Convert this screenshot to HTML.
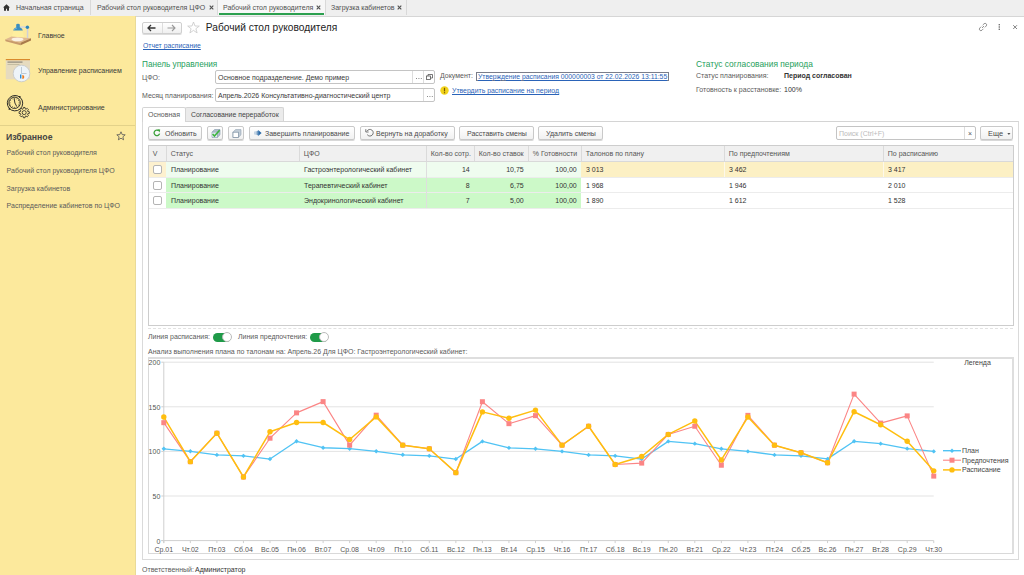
<!DOCTYPE html>
<html><head><meta charset="utf-8">
<style>
*{box-sizing:border-box;margin:0;padding:0}
html,body{width:1024px;height:575px;overflow:hidden;background:#fff;font-family:"Liberation Sans",sans-serif;font-size:7px;color:#5a5a5a}
.a{position:absolute;white-space:nowrap}
#tabs{position:absolute;left:0;top:0;width:1024px;height:16.5px;background:#efefef;border-bottom:1px solid #d6d6d6}
.tab{position:absolute;top:0;height:15px;border-right:1px solid #d9d9d9;line-height:15px;color:#505050}
.x{position:absolute;top:0;font-size:8px;color:#555}
#side{position:absolute;left:0;top:16px;width:136px;height:559px;background:#fce99c;border-right:1px solid #e9da98}
.btn{position:absolute;height:13.5px;border:1px solid #c9c9c9;border-radius:2px;background:linear-gradient(#fff,#f1f1f1);box-shadow:0 1px 0 #d8d8d8;line-height:12.5px;color:#4a4a4a;text-align:center}
.inp{position:absolute;height:14px;border:1px solid #c4c4c4;border-radius:2px;background:#fff;line-height:13.3px;color:#3a3a3a;padding-left:2px}
.sep{position:absolute;top:0;width:1px;height:100%;background:#ddd}
table{border-collapse:collapse}
</style></head><body>
<div id="tabs">
  <div class="tab" style="left:0;width:91px">
    <svg class="a" style="left:3px;top:4px" width="7" height="7" viewBox="0 0 7 7"><path d="M3.5 0.3L0 3.6h1v3.1h2V4.7h1v2h2V3.6h1z" fill="#333"/></svg>
    <span class="a" style="left:16px">Начальная страница</span>
  </div>
  <div class="tab" style="left:91px;width:127px">
    <span class="a" style="left:6px">Рабочий стол руководителя ЦФО</span><svg class="a" style="left:117.5px;top:4.9px" width="5" height="5" viewBox="0 0 5 5"><path d="M0.7 0.7l3.6 3.6M4.3 0.7l-3.6 3.6" stroke="#505050" stroke-width="1.1"/></svg>
  </div>
  <div class="tab" style="left:218px;width:108px;background:#f7f7f7">
    <span class="a" style="left:5px">Рабочий стол руководителя</span><svg class="a" style="left:98.3px;top:4.9px" width="5" height="5" viewBox="0 0 5 5"><path d="M0.7 0.7l3.6 3.6M4.3 0.7l-3.6 3.6" stroke="#505050" stroke-width="1.1"/></svg>
    <div class="a" style="left:1px;top:13px;width:105px;height:2px;background:#2ca04f"></div>
  </div>
  <div class="tab" style="left:326px;width:81px">
    <span class="a" style="left:5px">Загрузка кабинетов</span><svg class="a" style="left:71.3px;top:4.9px" width="5" height="5" viewBox="0 0 5 5"><path d="M0.7 0.7l3.6 3.6M4.3 0.7l-3.6 3.6" stroke="#505050" stroke-width="1.1"/></svg>
  </div>
</div>

<div id="side">
  <svg class="a" style="left:0;top:0" width="136" height="110" viewBox="0 16 136 110">
    <!-- lamp icon -->
    <polygon points="13.8,30.5 22.2,30.5 24.5,38 11,38" fill="#fff4a0" opacity="0.55"/>
    <path d="M5 39.4 L11.5 36.4 L31 38.2 L20.5 42.8 Z" fill="#dfb890"/>
    <path d="M5 39.4 L20.5 42.8 L20.5 45.3 L5.6 41.3 Z" fill="#c89a6c"/>
    <path d="M20.5 42.8 L31 38.2 L31 40.4 L20.5 45.3 Z" fill="#a97a4c"/>
    <ellipse cx="17.5" cy="39.3" rx="6" ry="1.9" fill="#fffaf2" opacity="0.85"/>
    <rect x="26.8" y="27.5" width="1.5" height="10.5" fill="#cfd0d8"/>
    <rect x="20" y="26.3" width="7" height="1.5" fill="#d5d6dc"/>
    <circle cx="27.4" cy="27.2" r="1.7" fill="#2c84ba"/>
    <path d="M16.2 24.8 Q16.2 23.8 18 23.8 Q19.8 23.8 19.8 24.8 V27.3 Q22.8 28.5 22.8 30.5 L13.2 30.5 Q13.2 28.5 16.2 27.3Z" fill="#3b8ec0"/>
    <path d="M14.3 29.8 Q15 28.5 17 28" stroke="#8cc8e8" stroke-width="0.7" fill="none"/>
    <!-- schedule icon -->
    <rect x="5.8" y="59.3" width="24.2" height="20" fill="#e6dbbf"/>
    <rect x="5.8" y="59" width="24.2" height="1.2" fill="#d98a2c"/>
    <rect x="7.5" y="61.5" width="15" height="1.2" fill="#8f8a7c"/>
    <rect x="7.5" y="64" width="12" height="0.6" fill="#b0a890"/>
    <circle cx="21.5" cy="73.5" r="8.3" fill="#eef4f8" stroke="#c4c8cc" stroke-width="0.8"/>
    <path d="M21.5 67 v6.5 h5" stroke="#8aa0b5" stroke-width="0.5" fill="none"/>
    <rect x="20" y="74.5" width="1.4" height="4" fill="#2d8fd8"/>
    <path d="M22.3 75 a2 2 0 0 1 0 4z" fill="#ef7b1a"/>
    <!-- admin icon -->
    <path d="M20.2 97.5 A7.7 7.7 0 1 1 9 108" fill="none" stroke="#222" stroke-width="0.95"/>
    <path d="M9 108 A7.7 7.7 0 0 1 20.2 97.5" fill="none" stroke="#222" stroke-width="0.95" stroke-dasharray="0"/>
    <circle cx="14.6" cy="102.8" r="5.7" fill="none" stroke="#222" stroke-width="0.9"/>
    <path d="M14.60 98.70L14.60 97.70M16.65 99.25L17.15 98.38M18.15 100.75L19.02 100.25M18.70 102.80L19.70 102.80M18.15 104.85L19.02 105.35M16.65 106.35L17.15 107.22M14.60 106.90L14.60 107.90M12.55 106.35L12.05 107.22M11.05 104.85L10.18 105.35M10.50 102.80L9.50 102.80M11.05 100.75L10.18 100.25M12.55 99.25L12.05 98.38" stroke="#222" stroke-width="0.7"/>
    <path d="M14.1 98.4 L14.9 103 L16.6 106.2" stroke="#222" stroke-width="0.9" fill="none"/>
    <circle cx="19.8" cy="96.8" r="0.9" fill="#222"/><circle cx="9.4" cy="108.9" r="0.9" fill="#222"/>
    <path d="M23.03 109.09L23.39 107.46L25.01 107.46L25.37 109.09L25.85 109.29L27.26 108.39L28.41 109.54L27.51 110.95L27.71 111.43L29.34 111.79L29.34 113.41L27.71 113.77L27.51 114.25L28.41 115.66L27.26 116.81L25.85 115.91L25.37 116.11L25.01 117.74L23.39 117.74L23.03 116.11L22.55 115.91L21.14 116.81L19.99 115.66L20.89 114.25L20.69 113.77L19.06 113.41L19.06 111.79L20.69 111.43L20.89 110.95L19.99 109.54L21.14 108.39L22.55 109.29Z" fill="#fce99c" stroke="#222" stroke-width="0.8"/>
    <circle cx="24.2" cy="112.6" r="2" fill="none" stroke="#222" stroke-width="0.8"/>
  </svg>
  <span class="a" style="left:38px;top:15.8px;color:#3a3a3a">Главное</span>
  <span class="a" style="left:38px;top:51px;color:#3a3a3a">Управление расписанием</span>
  <span class="a" style="left:38px;top:87.7px;color:#3a3a3a">Администрирование</span>
  <div class="a" style="left:0;top:109px;width:135px;height:1px;background:#e3d28a"></div>
  <span class="a" style="left:6px;top:115.8px;font-size:8.7px;font-weight:bold;color:#444">Избранное</span>
  <svg class="a" style="left:116px;top:115px" width="10" height="10" viewBox="0 0 10 10"><path d="M5 0.8 L6.2 3.6 L9.2 3.8 L6.9 5.8 L7.6 8.8 L5 7.2 L2.4 8.8 L3.1 5.8 L0.8 3.8 L3.8 3.6 Z" fill="none" stroke="#555" stroke-width="0.8"/></svg>
  <span class="a" style="left:6.6px;top:133.4px">Рабочий стол руководителя</span>
  <span class="a" style="left:6.6px;top:150.9px">Рабочий стол руководителя ЦФО</span>
  <span class="a" style="left:6.6px;top:168.5px">Загрузка кабинетов</span>
  <span class="a" style="left:6.6px;top:186.1px">Распределение кабинетов по ЦФО</span>
</div>

<div id="main">
  <!-- header -->
  <div class="a" style="left:142px;top:22px;width:40px;height:12px;border:1px solid #cfcfcf;border-radius:2px;background:linear-gradient(#fff,#f0f0f0);box-shadow:0 1px 0 #ddd"></div>
  <div class="a" style="left:162px;top:23px;width:1px;height:10px;background:#ddd"></div>
  <svg class="a" style="left:147px;top:24px" width="10" height="8" viewBox="0 0 10 8"><path d="M1 4h7.5M4 1L1 4l3 3" stroke="#333" stroke-width="1.3" fill="none"/></svg>
  <svg class="a" style="left:166px;top:24px" width="10" height="8" viewBox="0 0 10 8"><path d="M9 4H1.5M6 1l3 3-3 3" stroke="#999" stroke-width="1.1" fill="none"/></svg>
  <svg class="a" style="left:187px;top:21px" width="13" height="13" viewBox="0 0 13 13"><path d="M6.5 1 L8 5 L12.3 5.1 L8.9 7.7 L10.1 11.9 L6.5 9.4 L2.9 11.9 L4.1 7.7 L0.7 5.1 L5 5 Z" fill="none" stroke="#c8c8c8" stroke-width="0.8"/></svg>
  <span class="a" style="left:205.8px;top:22px;font-size:10.2px;color:#222">Рабочий стол руководителя</span>
  <svg class="a" style="left:978px;top:22px" width="10" height="10" viewBox="0 0 10 10"><g stroke="#888" stroke-width="0.9" fill="none"><path d="M4 6L6 4"/><path d="M3.2 4.6L1.8 6a1.3 1.3 0 0 0 2.2 2.2L5.4 6.8"/><path d="M6.8 5.4L8.2 4A1.3 1.3 0 0 0 6 1.8L4.6 3.2"/></g></svg>
  <svg class="a" style="left:997.5px;top:23px" width="3" height="8" viewBox="0 0 3 8"><g fill="#777"><rect x="0.6" y="1" width="1.4" height="1.4"/><rect x="0.6" y="3.3" width="1.4" height="1.4"/><rect x="0.6" y="5.6" width="1.4" height="1.4"/></g></svg>
  <svg class="a" style="left:1011px;top:23px" width="8" height="8" viewBox="0 0 8 8"><path d="M2.2 2.2l3.8 3.8M6 2.2l-3.8 3.8" stroke="#777" stroke-width="0.9"/></svg>
  <span class="a" style="left:143px;top:42.3px;font-size:6.85px;color:#2a63b8;text-decoration:underline">Отчет расписание</span>

  <!-- control panel -->
  <span class="a" style="left:142px;top:59.5px;font-size:8.2px;color:#25a05c">Панель управления</span>
  <span class="a" style="left:142px;top:73.5px">ЦФО:</span>
  <div class="inp" style="left:215px;top:70px;width:220px">Основное подразделение. Демо пример
    <div class="sep" style="left:196px"></div><div class="sep" style="left:207px"></div>
    <svg class="a" style="left:198.5px;top:5.8px" width="8" height="3" viewBox="0 0 8 3"><g fill="#8a8a8a"><rect x="1" y="1" width="1" height="1"/><rect x="3.4" y="1" width="1" height="1"/><rect x="5.8" y="1" width="1" height="1"/></g></svg>
    <svg class="a" style="left:210px;top:3px" width="7" height="6" viewBox="0 0 7 6"><g fill="none" stroke="#555" stroke-width="0.8"><rect x="0.5" y="2" width="4" height="3.5"/><path d="M2 2V0.5h4.5V4H4.5"/></g></svg>
  </div>
  <span class="a" style="left:142px;top:91.7px">Месяц планирования:</span>
  <div class="inp" style="left:215px;top:88px;width:220px">Апрель.2026 Консультативно-диагностический центр
    <div class="sep" style="left:207px"></div>
    <svg class="a" style="left:209.5px;top:5.8px" width="8" height="3" viewBox="0 0 8 3"><g fill="#8a8a8a"><rect x="1" y="1" width="1" height="1"/><rect x="3.4" y="1" width="1" height="1"/><rect x="5.8" y="1" width="1" height="1"/></g></svg>
  </div>
  <span class="a" style="left:440px;top:71.8px">Документ:</span>
  <span class="a" style="left:476px;top:71.6px;height:9px;line-height:7.8px;padding:0 1px;border:1px solid #7a7d8a;color:#2a63b8;text-decoration:underline;font-size:6.8px">Утверждение расписания 000000003 от 22.02.2026 13:11:55</span>
  <svg class="a" style="left:440px;top:85.8px" width="9" height="9" viewBox="0 0 9 9"><circle cx="4.5" cy="4.5" r="4.2" fill="#f2d31b"/><rect x="3.9" y="1.8" width="1.2" height="3.6" fill="#7a5d00"/><rect x="3.9" y="6.1" width="1.2" height="1.2" fill="#7a5d00"/></svg>
  <span class="a" style="left:452px;top:87.2px;font-size:6.9px;color:#2a63b8;text-decoration:underline">Утвердить расписание на период</span>

  <span class="a" style="left:696px;top:59px;font-size:8.4px;color:#25a05c">Статус согласования периода</span>
  <span class="a" style="left:696px;top:71.5px">Статус планирования:</span>
  <span class="a" style="left:784px;top:71.7px;font-weight:bold;color:#333">Период согласован</span>
  <span class="a" style="left:696px;top:86.3px">Готовность к расстановке:</span>
  <span class="a" style="left:784px;top:86.3px;color:#333">100%</span>

  <!-- tabs -->
  <div class="a" style="left:142px;top:121px;width:877px;height:439px;border:1px solid #dadada;border-top-color:#d4d4d4"></div>
  <div class="a" style="left:142px;top:107px;width:44px;height:15px;background:#fff;border:1px solid #d4d4d4;border-bottom:none;border-radius:2px 2px 0 0"><span class="a" style="left:5px;top:2.6px">Основная</span></div>
  <div class="a" style="left:185px;top:107px;width:99px;height:14px;background:#ebebeb;border:1px solid #d4d4d4;border-bottom:none;border-radius:2px 2px 0 0"><span class="a" style="left:5px;top:2.6px;color:#444;font-size:6.9px">Согласование переработок</span></div>

  <!-- toolbar -->
  <div class="btn" style="left:148px;top:126px;width:54px"><svg class="a" style="left:4px;top:2px" width="8" height="8" viewBox="0 0 8 8"><path d="M6.6 4.6A2.8 2.8 0 1 1 5.8 1.8" stroke="#3aa03a" stroke-width="1.3" fill="none"/><path d="M4.4 0.2L7.2 0.6 6.6 3.4z" fill="#3aa03a"/></svg><span class="a" style="left:16px;top:0.8px">Обновить</span></div>
  <div class="btn" style="left:207px;top:126px;width:16px"><svg class="a" style="left:3px;top:1.5px" width="10" height="9" viewBox="0 0 10 9"><path d="M1 3.2L3.5 0.6H9V5.8L6.4 8.4H1Z" fill="#b4c2cf" stroke="#7d93a8" stroke-width="0.6"/><path d="M1 3.2H6.4V8.4M6.4 3.2L9 0.6" fill="none" stroke="#7d93a8" stroke-width="0.6"/><rect x="1.3" y="3.5" width="4.8" height="4.6" fill="#e2eaf0"/><path d="M1.6 5L3.4 7.1L8.6 1.2" fill="none" stroke="#3cb43c" stroke-width="1.5"/></svg></div>
  <div class="btn" style="left:228px;top:126px;width:16px"><svg class="a" style="left:3px;top:1.5px" width="10" height="9" viewBox="0 0 10 9"><path d="M1 3.2L3.5 0.6H9V5.8L6.4 8.4H1Z" fill="#c3ced8" stroke="#8fa0b0" stroke-width="0.6"/><rect x="1" y="3.2" width="5.4" height="5.2" fill="#fff" stroke="#7a8ea0" stroke-width="0.7"/></svg></div>
  <div class="btn" style="left:249px;top:126px;width:106px"><svg class="a" style="left:4px;top:3px" width="8" height="6" viewBox="0 0 8 6"><rect x="0" y="1.5" width="1.2" height="3" fill="#2a6aa8" opacity="0.25"/><rect x="1.6" y="1.2" width="1.2" height="3.6" fill="#2a6aa8" opacity="0.5"/><rect x="3.2" y="0.8" width="1" height="4.4" fill="#2a6aa8" opacity="0.8"/><path d="M4.2 0L7.6 3L4.2 6Z" fill="#2a6aa8"/></svg><span class="a" style="left:15px;top:0.8px">Завершить планирование</span></div>
  <div class="btn" style="left:360px;top:126px;width:95px"><svg class="a" style="left:4px;top:1px" width="9" height="9" viewBox="0 0 9 9"><path d="M2 3.2A3.3 3.3 0 1 1 2.2 6.6" stroke="#555" stroke-width="0.8" fill="none"/><path d="M0.8 1.2V4h2.8" stroke="#555" stroke-width="0.8" fill="none"/></svg><span class="a" style="left:15px;top:0.8px">Вернуть на доработку</span></div>
  <div class="btn" style="left:459px;top:126px;width:75px"><span class="a" style="left:7px;top:0.8px">Расставить смены</span></div>
  <div class="btn" style="left:538px;top:126px;width:65px"><span class="a" style="left:7px;top:0.8px">Удалить смены</span></div>
  <div class="inp" style="left:836px;top:126px;width:140px;color:#bbb">Поиск (Ctrl+F)<div class="sep" style="left:127px"></div><span class="a" style="left:131px;top:0;color:#555;font-size:7px">×</span></div>
  <div class="btn" style="left:980px;top:126px;width:33px"><span class="a" style="left:7px;top:0.6px;font-size:7.4px">Еще</span><svg class="a" style="left:25.5px;top:5.5px" width="4" height="3" viewBox="0 0 4 3"><path d="M0.3 0h3.2L1.9 2z" fill="#555"/></svg></div>

  <!-- table -->
  <div id="tbl" class="a" style="left:148px;top:145px;width:866px;height:181px;border:1px solid #cdcdcd">
<div class="a" style="left:0;top:0;width:864px;height:15px;background:#f0f0f0"></div>
<div class="a" style="left:0;top:15px;width:864px;height:1px;background:#d9d9d9"></div>
<div class="a" style="left:17px;top:0;width:1px;height:15px;background:#dadada"></div>
<div class="a" style="left:150px;top:0;width:1px;height:15px;background:#dadada"></div>
<div class="a" style="left:277px;top:0;width:1px;height:15px;background:#dadada"></div>
<div class="a" style="left:325px;top:0;width:1px;height:15px;background:#dadada"></div>
<div class="a" style="left:379px;top:0;width:1px;height:15px;background:#dadada"></div>
<div class="a" style="left:432px;top:0;width:1px;height:15px;background:#dadada"></div>
<div class="a" style="left:575px;top:0;width:1px;height:15px;background:#dadada"></div>
<div class="a" style="left:734px;top:0;width:1px;height:15px;background:#dadada"></div>
<span class="a" style="left:3.8px;top:3.8px;color:#555">V</span>
<span class="a" style="left:21.8px;top:3.8px;color:#555">Статус</span>
<span class="a" style="left:154.8px;top:3.8px;color:#555">ЦФО</span>
<span class="a" style="left:281.8px;top:3.8px;color:#555">Кол-во сотр.</span>
<span class="a" style="left:329.8px;top:3.8px;color:#555">Кол-во ставок</span>
<span class="a" style="left:383.8px;top:3.8px;color:#555">% Готовности</span>
<span class="a" style="left:436.8px;top:3.8px;color:#555">Талонов по плану</span>
<span class="a" style="left:579.8px;top:3.8px;color:#555">По предпочтениям</span>
<span class="a" style="left:738.8px;top:3.8px;color:#555">По расписанию</span>
<div class="a" style="left:0px;top:16px;width:17px;height:15px;background:#fdf1cf"></div>
<div class="a" style="left:17px;top:16px;width:133px;height:15px;background:#effcef"></div>
<div class="a" style="left:150px;top:16px;width:127px;height:15px;background:#effcef"></div>
<div class="a" style="left:277px;top:16px;width:48px;height:15px;background:#effcef"></div>
<div class="a" style="left:325px;top:16px;width:54px;height:15px;background:#effcef"></div>
<div class="a" style="left:379px;top:16px;width:53px;height:15px;background:#effcef"></div>
<div class="a" style="left:432px;top:16px;width:143px;height:15px;background:#fcf0c4"></div>
<div class="a" style="left:575px;top:16px;width:159px;height:15px;background:#fcf0c4"></div>
<div class="a" style="left:734px;top:16px;width:130px;height:15px;background:#fcf0c4"></div>
<div class="a" style="left:0;top:31px;width:864px;height:1px;background:#ececec"></div>
<div class="a" style="left:4px;top:19px;width:9px;height:9px;border:1px solid #b4b4b4;border-radius:2px;background:#fff"></div>
<span class="a" style="left:22px;top:20.2px;color:#333">Планирование</span>
<span class="a" style="left:155px;top:20.2px;color:#333">Гастроэнтерологический кабинет</span>
<span class="a" style="left:277px;width:43.7px;text-align:right;top:20.2px;color:#333">14</span>
<span class="a" style="left:325px;width:49.7px;text-align:right;top:20.2px;color:#333">10,75</span>
<span class="a" style="left:379px;width:48.7px;text-align:right;top:20.2px;color:#333">100,00</span>
<span class="a" style="left:437px;top:20.2px;color:#333">3 013</span>
<span class="a" style="left:580px;top:20.2px;color:#333">3 462</span>
<span class="a" style="left:739px;top:20.2px;color:#333">3 417</span>
<div class="a" style="left:0px;top:32px;width:17px;height:14px;background:#ffffff"></div>
<div class="a" style="left:17px;top:32px;width:133px;height:14px;background:#ccf9c8"></div>
<div class="a" style="left:150px;top:32px;width:127px;height:14px;background:#ccf9c8"></div>
<div class="a" style="left:277px;top:32px;width:48px;height:14px;background:#ccf9c8"></div>
<div class="a" style="left:325px;top:32px;width:54px;height:14px;background:#ccf9c8"></div>
<div class="a" style="left:379px;top:32px;width:53px;height:14px;background:#ccf9c8"></div>
<div class="a" style="left:432px;top:32px;width:143px;height:14px;background:#ffffff"></div>
<div class="a" style="left:575px;top:32px;width:159px;height:14px;background:#ffffff"></div>
<div class="a" style="left:734px;top:32px;width:130px;height:14px;background:#ffffff"></div>
<div class="a" style="left:0;top:46px;width:864px;height:1px;background:#ececec"></div>
<div class="a" style="left:4px;top:35px;width:9px;height:9px;border:1px solid #b4b4b4;border-radius:2px;background:#fff"></div>
<span class="a" style="left:22px;top:36.2px;color:#333">Планирование</span>
<span class="a" style="left:155px;top:36.2px;color:#333">Терапевтический кабинет</span>
<span class="a" style="left:277px;width:43.7px;text-align:right;top:36.2px;color:#333">8</span>
<span class="a" style="left:325px;width:49.7px;text-align:right;top:36.2px;color:#333">6,75</span>
<span class="a" style="left:379px;width:48.7px;text-align:right;top:36.2px;color:#333">100,00</span>
<span class="a" style="left:437px;top:36.2px;color:#333">1 968</span>
<span class="a" style="left:580px;top:36.2px;color:#333">1 946</span>
<span class="a" style="left:739px;top:36.2px;color:#333">2 010</span>
<div class="a" style="left:0px;top:47px;width:17px;height:15px;background:#ffffff"></div>
<div class="a" style="left:17px;top:47px;width:133px;height:15px;background:#ccf9c8"></div>
<div class="a" style="left:150px;top:47px;width:127px;height:15px;background:#ccf9c8"></div>
<div class="a" style="left:277px;top:47px;width:48px;height:15px;background:#ccf9c8"></div>
<div class="a" style="left:325px;top:47px;width:54px;height:15px;background:#ccf9c8"></div>
<div class="a" style="left:379px;top:47px;width:53px;height:15px;background:#ccf9c8"></div>
<div class="a" style="left:432px;top:47px;width:143px;height:15px;background:#ffffff"></div>
<div class="a" style="left:575px;top:47px;width:159px;height:15px;background:#ffffff"></div>
<div class="a" style="left:734px;top:47px;width:130px;height:15px;background:#ffffff"></div>
<div class="a" style="left:0;top:62px;width:864px;height:1px;background:#ececec"></div>
<div class="a" style="left:4px;top:50px;width:9px;height:9px;border:1px solid #b4b4b4;border-radius:2px;background:#fff"></div>
<span class="a" style="left:22px;top:51.2px;color:#333">Планирование</span>
<span class="a" style="left:155px;top:51.2px;color:#333">Эндокринологический кабинет</span>
<span class="a" style="left:277px;width:43.7px;text-align:right;top:51.2px;color:#333">7</span>
<span class="a" style="left:325px;width:49.7px;text-align:right;top:51.2px;color:#333">5,00</span>
<span class="a" style="left:379px;width:48.7px;text-align:right;top:51.2px;color:#333">100,00</span>
<span class="a" style="left:437px;top:51.2px;color:#333">1 890</span>
<span class="a" style="left:580px;top:51.2px;color:#333">1 612</span>
<span class="a" style="left:739px;top:51.2px;color:#333">1 528</span>
<div class="a" style="left:575px;top:16px;width:1px;height:15px;background:#fdf8ea"></div>
<div class="a" style="left:734px;top:16px;width:1px;height:15px;background:#fdf8ea"></div>
<div class="a" style="left:277px;top:16px;width:1px;height:46px;background:#dedede"></div>
</div>

  <!-- toggles -->
  <div class="a" style="left:148px;top:328px;width:865px;height:0;border-top:1px dashed #e2e2e2"></div>
  <span class="a" style="left:148px;top:333.3px">Линия расписания:</span>
  <div class="a" style="left:213px;top:332.5px;width:18px;height:9px;border-radius:5px;background:#1f9a48"></div><div class="a" style="left:222px;top:331.5px;width:10px;height:10px;border-radius:50%;background:#fff;border:1px solid #bbb"></div>
  <span class="a" style="left:238px;top:333.3px">Линия предпочтения:</span>
  <div class="a" style="left:310px;top:332.5px;width:18px;height:9px;border-radius:5px;background:#1f9a48"></div><div class="a" style="left:319px;top:331.5px;width:10px;height:10px;border-radius:50%;background:#fff;border:1px solid #bbb"></div>
  <span class="a" style="left:148px;top:348.3px">Анализ выполнения плана по талонам на: Апрель.26 Для ЦФО: Гастроэнтерологический кабинет:</span>

  <!-- chart -->
  <div id="chart" class="a" style="left:148px;top:357px;width:866px;height:197px;border:1px solid #d9d9d9;border-top:2px solid #dedede;border-right:2px solid #dedede"></div>
<!--CHART--><svg class="a" style="left:0;top:0" width="1024" height="575" viewBox="0 0 1024 575">
<line x1="163.8" y1="362.20" x2="933.75" y2="362.20" stroke="#e3e3e3" stroke-width="1"/>
<line x1="163.8" y1="406.80" x2="933.75" y2="406.80" stroke="#e3e3e3" stroke-width="1"/>
<line x1="163.8" y1="451.40" x2="933.75" y2="451.40" stroke="#e3e3e3" stroke-width="1"/>
<line x1="163.8" y1="496.00" x2="933.75" y2="496.00" stroke="#e3e3e3" stroke-width="1"/>
<line x1="163.8" y1="362.20" x2="163.8" y2="543.1" stroke="#cfcfcf" stroke-width="1"/>
<line x1="161.3" y1="540.6" x2="933.75" y2="540.6" stroke="#cfcfcf" stroke-width="1"/>
<line x1="161.3" y1="362.20" x2="163.8" y2="362.20" stroke="#cfcfcf" stroke-width="1"/>
<text x="160.3" y="365.10" text-anchor="end" font-size="7" fill="#555">200</text>
<line x1="161.3" y1="406.80" x2="163.8" y2="406.80" stroke="#cfcfcf" stroke-width="1"/>
<text x="160.3" y="409.70" text-anchor="end" font-size="7" fill="#555">150</text>
<line x1="161.3" y1="451.40" x2="163.8" y2="451.40" stroke="#cfcfcf" stroke-width="1"/>
<text x="160.3" y="454.30" text-anchor="end" font-size="7" fill="#555">100</text>
<line x1="161.3" y1="496.00" x2="163.8" y2="496.00" stroke="#cfcfcf" stroke-width="1"/>
<text x="160.3" y="498.90" text-anchor="end" font-size="7" fill="#555">50</text>
<line x1="161.3" y1="540.60" x2="163.8" y2="540.60" stroke="#cfcfcf" stroke-width="1"/>
<text x="160.3" y="543.50" text-anchor="end" font-size="7" fill="#555">0</text>
<line x1="163.80" y1="540.6" x2="163.80" y2="543.1" stroke="#cfcfcf" stroke-width="1"/>
<text x="163.80" y="552.20" text-anchor="middle" font-size="7" fill="#555">Ср.01</text>
<line x1="190.35" y1="540.6" x2="190.35" y2="543.1" stroke="#cfcfcf" stroke-width="1"/>
<text x="190.35" y="552.20" text-anchor="middle" font-size="7" fill="#555">Чт.02</text>
<line x1="216.90" y1="540.6" x2="216.90" y2="543.1" stroke="#cfcfcf" stroke-width="1"/>
<text x="216.90" y="552.20" text-anchor="middle" font-size="7" fill="#555">Пт.03</text>
<line x1="243.45" y1="540.6" x2="243.45" y2="543.1" stroke="#cfcfcf" stroke-width="1"/>
<text x="243.45" y="552.20" text-anchor="middle" font-size="7" fill="#555">Сб.04</text>
<line x1="270.00" y1="540.6" x2="270.00" y2="543.1" stroke="#cfcfcf" stroke-width="1"/>
<text x="270.00" y="552.20" text-anchor="middle" font-size="7" fill="#555">Вс.05</text>
<line x1="296.55" y1="540.6" x2="296.55" y2="543.1" stroke="#cfcfcf" stroke-width="1"/>
<text x="296.55" y="552.20" text-anchor="middle" font-size="7" fill="#555">Пн.06</text>
<line x1="323.10" y1="540.6" x2="323.10" y2="543.1" stroke="#cfcfcf" stroke-width="1"/>
<text x="323.10" y="552.20" text-anchor="middle" font-size="7" fill="#555">Вт.07</text>
<line x1="349.65" y1="540.6" x2="349.65" y2="543.1" stroke="#cfcfcf" stroke-width="1"/>
<text x="349.65" y="552.20" text-anchor="middle" font-size="7" fill="#555">Ср.08</text>
<line x1="376.20" y1="540.6" x2="376.20" y2="543.1" stroke="#cfcfcf" stroke-width="1"/>
<text x="376.20" y="552.20" text-anchor="middle" font-size="7" fill="#555">Чт.09</text>
<line x1="402.75" y1="540.6" x2="402.75" y2="543.1" stroke="#cfcfcf" stroke-width="1"/>
<text x="402.75" y="552.20" text-anchor="middle" font-size="7" fill="#555">Пт.10</text>
<line x1="429.30" y1="540.6" x2="429.30" y2="543.1" stroke="#cfcfcf" stroke-width="1"/>
<text x="429.30" y="552.20" text-anchor="middle" font-size="7" fill="#555">Сб.11</text>
<line x1="455.85" y1="540.6" x2="455.85" y2="543.1" stroke="#cfcfcf" stroke-width="1"/>
<text x="455.85" y="552.20" text-anchor="middle" font-size="7" fill="#555">Вс.12</text>
<line x1="482.40" y1="540.6" x2="482.40" y2="543.1" stroke="#cfcfcf" stroke-width="1"/>
<text x="482.40" y="552.20" text-anchor="middle" font-size="7" fill="#555">Пн.13</text>
<line x1="508.95" y1="540.6" x2="508.95" y2="543.1" stroke="#cfcfcf" stroke-width="1"/>
<text x="508.95" y="552.20" text-anchor="middle" font-size="7" fill="#555">Вт.14</text>
<line x1="535.50" y1="540.6" x2="535.50" y2="543.1" stroke="#cfcfcf" stroke-width="1"/>
<text x="535.50" y="552.20" text-anchor="middle" font-size="7" fill="#555">Ср.15</text>
<line x1="562.05" y1="540.6" x2="562.05" y2="543.1" stroke="#cfcfcf" stroke-width="1"/>
<text x="562.05" y="552.20" text-anchor="middle" font-size="7" fill="#555">Чт.16</text>
<line x1="588.60" y1="540.6" x2="588.60" y2="543.1" stroke="#cfcfcf" stroke-width="1"/>
<text x="588.60" y="552.20" text-anchor="middle" font-size="7" fill="#555">Пт.17</text>
<line x1="615.15" y1="540.6" x2="615.15" y2="543.1" stroke="#cfcfcf" stroke-width="1"/>
<text x="615.15" y="552.20" text-anchor="middle" font-size="7" fill="#555">Сб.18</text>
<line x1="641.70" y1="540.6" x2="641.70" y2="543.1" stroke="#cfcfcf" stroke-width="1"/>
<text x="641.70" y="552.20" text-anchor="middle" font-size="7" fill="#555">Вс.19</text>
<line x1="668.25" y1="540.6" x2="668.25" y2="543.1" stroke="#cfcfcf" stroke-width="1"/>
<text x="668.25" y="552.20" text-anchor="middle" font-size="7" fill="#555">Пн.20</text>
<line x1="694.80" y1="540.6" x2="694.80" y2="543.1" stroke="#cfcfcf" stroke-width="1"/>
<text x="694.80" y="552.20" text-anchor="middle" font-size="7" fill="#555">Вт.21</text>
<line x1="721.35" y1="540.6" x2="721.35" y2="543.1" stroke="#cfcfcf" stroke-width="1"/>
<text x="721.35" y="552.20" text-anchor="middle" font-size="7" fill="#555">Ср.22</text>
<line x1="747.90" y1="540.6" x2="747.90" y2="543.1" stroke="#cfcfcf" stroke-width="1"/>
<text x="747.90" y="552.20" text-anchor="middle" font-size="7" fill="#555">Чт.23</text>
<line x1="774.45" y1="540.6" x2="774.45" y2="543.1" stroke="#cfcfcf" stroke-width="1"/>
<text x="774.45" y="552.20" text-anchor="middle" font-size="7" fill="#555">Пт.24</text>
<line x1="801.00" y1="540.6" x2="801.00" y2="543.1" stroke="#cfcfcf" stroke-width="1"/>
<text x="801.00" y="552.20" text-anchor="middle" font-size="7" fill="#555">Сб.25</text>
<line x1="827.55" y1="540.6" x2="827.55" y2="543.1" stroke="#cfcfcf" stroke-width="1"/>
<text x="827.55" y="552.20" text-anchor="middle" font-size="7" fill="#555">Вс.26</text>
<line x1="854.10" y1="540.6" x2="854.10" y2="543.1" stroke="#cfcfcf" stroke-width="1"/>
<text x="854.10" y="552.20" text-anchor="middle" font-size="7" fill="#555">Пн.27</text>
<line x1="880.65" y1="540.6" x2="880.65" y2="543.1" stroke="#cfcfcf" stroke-width="1"/>
<text x="880.65" y="552.20" text-anchor="middle" font-size="7" fill="#555">Вт.28</text>
<line x1="907.20" y1="540.6" x2="907.20" y2="543.1" stroke="#cfcfcf" stroke-width="1"/>
<text x="907.20" y="552.20" text-anchor="middle" font-size="7" fill="#555">Ср.29</text>
<line x1="933.75" y1="540.6" x2="933.75" y2="543.1" stroke="#cfcfcf" stroke-width="1"/>
<text x="933.75" y="552.20" text-anchor="middle" font-size="7" fill="#555">Чт.30</text>
<polyline points="163.80,448.81 190.35,451.31 216.90,454.88 243.45,455.86 270.00,459.07 296.55,441.32 323.10,447.74 349.65,448.72 376.20,451.31 402.75,454.79 429.30,455.86 455.85,459.07 482.40,441.41 508.95,447.83 535.50,448.81 562.05,451.40 588.60,454.88 615.15,455.86 641.70,459.07 668.25,441.41 694.80,443.64 721.35,448.81 747.90,451.40 774.45,454.88 801.00,455.86 827.55,458.89 854.10,441.32 880.65,443.64 907.20,448.63 933.75,451.40" fill="none" stroke="#50c3f4" stroke-width="1.3" stroke-linejoin="round"/>
<polyline points="163.80,422.68 190.35,461.66 216.90,433.20 243.45,477.00 270.00,438.20 296.55,412.87 323.10,401.63 349.65,445.16 376.20,415.18 402.75,445.16 429.30,448.81 455.85,472.63 482.40,401.72 508.95,423.66 535.50,415.63 562.05,445.16 588.60,426.25 615.15,464.51 641.70,463.09 668.25,434.45 694.80,426.25 721.35,465.23 747.90,415.36 774.45,445.16 801.00,452.74 827.55,462.73 854.10,394.13 880.65,423.12 907.20,415.90 933.75,476.11" fill="none" stroke="#fb8585" stroke-width="1.1" stroke-linejoin="round"/>
<polyline points="163.80,417.06 190.35,461.66 216.90,433.20 243.45,477.00 270.00,431.78 296.55,422.50 323.10,422.50 349.65,439.54 376.20,416.88 402.75,445.16 429.30,448.81 455.85,472.63 482.40,411.88 508.95,418.31 535.50,410.10 562.05,445.16 588.60,426.25 615.15,464.51 641.70,456.48 668.25,434.45 694.80,421.07 721.35,459.96 747.90,417.06 774.45,445.16 801.00,452.74 827.55,462.73 854.10,411.71 880.65,424.73 907.20,441.32 933.75,470.85" fill="none" stroke="#ffbe0f" stroke-width="1.5" stroke-linejoin="round"/>
<path d="M163.80 446.61L166.00 448.81L163.80 451.01L161.60 448.81Z" fill="#50c3f4"/>
<path d="M190.35 449.11L192.55 451.31L190.35 453.51L188.15 451.31Z" fill="#50c3f4"/>
<path d="M216.90 452.68L219.10 454.88L216.90 457.08L214.70 454.88Z" fill="#50c3f4"/>
<path d="M243.45 453.66L245.65 455.86L243.45 458.06L241.25 455.86Z" fill="#50c3f4"/>
<path d="M270.00 456.87L272.20 459.07L270.00 461.27L267.80 459.07Z" fill="#50c3f4"/>
<path d="M296.55 439.12L298.75 441.32L296.55 443.52L294.35 441.32Z" fill="#50c3f4"/>
<path d="M323.10 445.54L325.30 447.74L323.10 449.94L320.90 447.74Z" fill="#50c3f4"/>
<path d="M349.65 446.52L351.85 448.72L349.65 450.92L347.45 448.72Z" fill="#50c3f4"/>
<path d="M376.20 449.11L378.40 451.31L376.20 453.51L374.00 451.31Z" fill="#50c3f4"/>
<path d="M402.75 452.59L404.95 454.79L402.75 456.99L400.55 454.79Z" fill="#50c3f4"/>
<path d="M429.30 453.66L431.50 455.86L429.30 458.06L427.10 455.86Z" fill="#50c3f4"/>
<path d="M455.85 456.87L458.05 459.07L455.85 461.27L453.65 459.07Z" fill="#50c3f4"/>
<path d="M482.40 439.21L484.60 441.41L482.40 443.61L480.20 441.41Z" fill="#50c3f4"/>
<path d="M508.95 445.63L511.15 447.83L508.95 450.03L506.75 447.83Z" fill="#50c3f4"/>
<path d="M535.50 446.61L537.70 448.81L535.50 451.01L533.30 448.81Z" fill="#50c3f4"/>
<path d="M562.05 449.20L564.25 451.40L562.05 453.60L559.85 451.40Z" fill="#50c3f4"/>
<path d="M588.60 452.68L590.80 454.88L588.60 457.08L586.40 454.88Z" fill="#50c3f4"/>
<path d="M615.15 453.66L617.35 455.86L615.15 458.06L612.95 455.86Z" fill="#50c3f4"/>
<path d="M641.70 456.87L643.90 459.07L641.70 461.27L639.50 459.07Z" fill="#50c3f4"/>
<path d="M668.25 439.21L670.45 441.41L668.25 443.61L666.05 441.41Z" fill="#50c3f4"/>
<path d="M694.80 441.44L697.00 443.64L694.80 445.84L692.60 443.64Z" fill="#50c3f4"/>
<path d="M721.35 446.61L723.55 448.81L721.35 451.01L719.15 448.81Z" fill="#50c3f4"/>
<path d="M747.90 449.20L750.10 451.40L747.90 453.60L745.70 451.40Z" fill="#50c3f4"/>
<path d="M774.45 452.68L776.65 454.88L774.45 457.08L772.25 454.88Z" fill="#50c3f4"/>
<path d="M801.00 453.66L803.20 455.86L801.00 458.06L798.80 455.86Z" fill="#50c3f4"/>
<path d="M827.55 456.69L829.75 458.89L827.55 461.09L825.35 458.89Z" fill="#50c3f4"/>
<path d="M854.10 439.12L856.30 441.32L854.10 443.52L851.90 441.32Z" fill="#50c3f4"/>
<path d="M880.65 441.44L882.85 443.64L880.65 445.84L878.45 443.64Z" fill="#50c3f4"/>
<path d="M907.20 446.43L909.40 448.63L907.20 450.83L905.00 448.63Z" fill="#50c3f4"/>
<path d="M933.75 449.20L935.95 451.40L933.75 453.60L931.55 451.40Z" fill="#50c3f4"/>
<rect x="161.30" y="420.18" width="5" height="5" fill="#fb8585"/>
<rect x="187.85" y="459.16" width="5" height="5" fill="#fb8585"/>
<rect x="214.40" y="430.70" width="5" height="5" fill="#fb8585"/>
<rect x="240.95" y="474.50" width="5" height="5" fill="#fb8585"/>
<rect x="267.50" y="435.70" width="5" height="5" fill="#fb8585"/>
<rect x="294.05" y="410.37" width="5" height="5" fill="#fb8585"/>
<rect x="320.60" y="399.13" width="5" height="5" fill="#fb8585"/>
<rect x="347.15" y="442.66" width="5" height="5" fill="#fb8585"/>
<rect x="373.70" y="412.68" width="5" height="5" fill="#fb8585"/>
<rect x="400.25" y="442.66" width="5" height="5" fill="#fb8585"/>
<rect x="426.80" y="446.31" width="5" height="5" fill="#fb8585"/>
<rect x="453.35" y="470.13" width="5" height="5" fill="#fb8585"/>
<rect x="479.90" y="399.22" width="5" height="5" fill="#fb8585"/>
<rect x="506.45" y="421.16" width="5" height="5" fill="#fb8585"/>
<rect x="533.00" y="413.13" width="5" height="5" fill="#fb8585"/>
<rect x="559.55" y="442.66" width="5" height="5" fill="#fb8585"/>
<rect x="586.10" y="423.75" width="5" height="5" fill="#fb8585"/>
<rect x="612.65" y="462.01" width="5" height="5" fill="#fb8585"/>
<rect x="639.20" y="460.59" width="5" height="5" fill="#fb8585"/>
<rect x="665.75" y="431.95" width="5" height="5" fill="#fb8585"/>
<rect x="692.30" y="423.75" width="5" height="5" fill="#fb8585"/>
<rect x="718.85" y="462.73" width="5" height="5" fill="#fb8585"/>
<rect x="745.40" y="412.86" width="5" height="5" fill="#fb8585"/>
<rect x="771.95" y="442.66" width="5" height="5" fill="#fb8585"/>
<rect x="798.50" y="450.24" width="5" height="5" fill="#fb8585"/>
<rect x="825.05" y="460.23" width="5" height="5" fill="#fb8585"/>
<rect x="851.60" y="391.63" width="5" height="5" fill="#fb8585"/>
<rect x="878.15" y="420.62" width="5" height="5" fill="#fb8585"/>
<rect x="904.70" y="413.40" width="5" height="5" fill="#fb8585"/>
<rect x="931.25" y="473.61" width="5" height="5" fill="#fb8585"/>
<circle cx="163.80" cy="417.06" r="2.7" fill="#ffbe0f"/>
<circle cx="190.35" cy="461.66" r="2.7" fill="#ffbe0f"/>
<circle cx="216.90" cy="433.20" r="2.7" fill="#ffbe0f"/>
<circle cx="243.45" cy="477.00" r="2.7" fill="#ffbe0f"/>
<circle cx="270.00" cy="431.78" r="2.7" fill="#ffbe0f"/>
<circle cx="296.55" cy="422.50" r="2.7" fill="#ffbe0f"/>
<circle cx="323.10" cy="422.50" r="2.7" fill="#ffbe0f"/>
<circle cx="349.65" cy="439.54" r="2.7" fill="#ffbe0f"/>
<circle cx="376.20" cy="416.88" r="2.7" fill="#ffbe0f"/>
<circle cx="402.75" cy="445.16" r="2.7" fill="#ffbe0f"/>
<circle cx="429.30" cy="448.81" r="2.7" fill="#ffbe0f"/>
<circle cx="455.85" cy="472.63" r="2.7" fill="#ffbe0f"/>
<circle cx="482.40" cy="411.88" r="2.7" fill="#ffbe0f"/>
<circle cx="508.95" cy="418.31" r="2.7" fill="#ffbe0f"/>
<circle cx="535.50" cy="410.10" r="2.7" fill="#ffbe0f"/>
<circle cx="562.05" cy="445.16" r="2.7" fill="#ffbe0f"/>
<circle cx="588.60" cy="426.25" r="2.7" fill="#ffbe0f"/>
<circle cx="615.15" cy="464.51" r="2.7" fill="#ffbe0f"/>
<circle cx="641.70" cy="456.48" r="2.7" fill="#ffbe0f"/>
<circle cx="668.25" cy="434.45" r="2.7" fill="#ffbe0f"/>
<circle cx="694.80" cy="421.07" r="2.7" fill="#ffbe0f"/>
<circle cx="721.35" cy="459.96" r="2.7" fill="#ffbe0f"/>
<circle cx="747.90" cy="417.06" r="2.7" fill="#ffbe0f"/>
<circle cx="774.45" cy="445.16" r="2.7" fill="#ffbe0f"/>
<circle cx="801.00" cy="452.74" r="2.7" fill="#ffbe0f"/>
<circle cx="827.55" cy="462.73" r="2.7" fill="#ffbe0f"/>
<circle cx="854.10" cy="411.71" r="2.7" fill="#ffbe0f"/>
<circle cx="880.65" cy="424.73" r="2.7" fill="#ffbe0f"/>
<circle cx="907.20" cy="441.32" r="2.7" fill="#ffbe0f"/>
<circle cx="933.75" cy="470.85" r="2.7" fill="#ffbe0f"/>
<text x="977.5" y="365.3" text-anchor="middle" font-size="7" fill="#444">Легенда</text>
<line x1="943" y1="450.7" x2="961" y2="450.7" stroke="#50c3f4" stroke-width="1.4"/>
<path d="M952 448.5L954.2 450.7L952 452.9L949.8 450.7Z" fill="#50c3f4"/>
<text x="962" y="453.2" font-size="7" fill="#444">План</text>
<line x1="943" y1="460.2" x2="961" y2="460.2" stroke="#fb8585" stroke-width="1.1"/>
<rect x="949.5" y="457.7" width="5" height="5" fill="#fb8585"/>
<text x="962" y="462.7" font-size="7" fill="#444">Предпочтения</text>
<line x1="943" y1="469.9" x2="961" y2="469.9" stroke="#ffbe0f" stroke-width="1.5"/>
<circle cx="952" cy="469.9" r="2.7" fill="#ffbe0f"/>
<text x="962" y="472.4" font-size="7" fill="#444">Расписание</text>
</svg><!--/CHART-->

  <span class="a" style="left:142px;top:565.5px">Ответственный:</span>
  <span class="a" style="left:195px;top:565.5px;color:#333">Администратор</span>
</div>
</body></html>
